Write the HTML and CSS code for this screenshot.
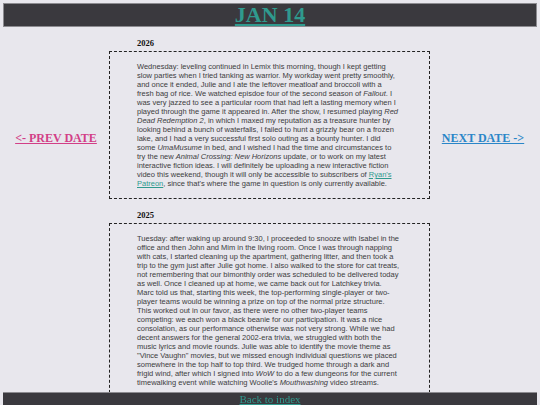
FILE: index.html
```html
<!DOCTYPE html>
<html lang="en">
<head>
  <meta charset="UTF-8">
  <meta name="viewport" content="width=device-width, initial-scale=1.0">
  <title>JAN 14</title>
  <link rel="stylesheet" href="styles.css">
</head>
<body>

<div class="header">
  <h1><a href="#">JAN 14</a></h1>
</div>

<div class="main">
  <div class="side">
    <a class="prev" href="#">&lt;- PREV DATE</a>
  </div>

  <div class="entries">
    <h3 class="year">2026</h3>
    <div class="entry">
      <p>Wednesday: leveling continued in Lemix this morning, though I kept getting slow parties when I tried tanking as warrior. My workday went pretty smoothly, and once it ended, Julie and I ate the leftover meatloaf and broccoli with a fresh bag of rice. We watched episdoe four of the second season of <i>Fallout</i>. I was very jazzed to see a particular room that had left a lasting memory when I played through the game it appeared in. After the show, I resumed playing <i>Red Dead Redemption 2</i>, in which I maxed my reputation as a treasure hunter by looking behind a bunch of waterfalls, I failed to hunt a grizzly bear on a frozen lake, and I had a very successful first solo outing as a bounty hunter. I did some <i>UmaMusume</i> in bed, and I wished I had the time and circumstances to try the new <i>Animal Crossing: New Horizons</i> update, or to work on my latest interactive fiction ideas. I will definitely be uploading a new interactive fiction video this weekend, though it will only be accessible to subscribers of <a href="#">Ryan's Patreon</a>, since that's where the game in question is only currently available.</p>
    </div>

    <h3 class="year">2025</h3>
    <div class="entry">
      <p>Tuesday: after waking up around 9:30, I proceeded to snooze with Isabel in the office and then John and Mim in the living room. Once I was through napping with cats, I started cleaning up the apartment, gathering litter, and then took a trip to the gym just after Julie got home. I also walked to the store for cat treats, not remembering that our bimonthly order was scheduled to be delivered today as well. Once I cleaned up at home, we came back out for Latchkey trivia. Marc told us that, starting this week, the top-performing single-player or two-player teams would be winning a prize on top of the normal prize structure. This worked out in our favor, as there were no other two-player teams competing: we each won a black beanie for our participation. It was a nice consolation, as our performance otherwise was not very strong. While we had decent answers for the general 2002-era trivia, we struggled with both the music lyrics and movie rounds. Julie was able to identify the movie theme as "Vince Vaughn" movies, but we missed enough individual questions we placed somewhere in the top half to top third. We trudged home through a dark and frigid wind, after which I signed into <i>WoW</i> to do a few dungeons for the current timewalking event while watching Woolie's <i>Mouthwashing</i> video streams.</p>
    </div>
  </div>

  <div class="side">
    <a class="next" href="#">NEXT DATE -&gt;</a>
  </div>
</div>

<div class="footer">
  <a href="#">Back to index</a>
</div>

</body>
</html>
```

FILE: styles.css
```css
body {
  margin: 3px;
  background: #e8e7ed;
  font-family: "Liberation Serif", serif;
}

/* barra del titulo */
.header {
  background: #3a393e;
  border: 1px solid #8c8b90;
  text-align: center;
}

.header h1 {
  margin: 0;
  font-size: 22px;
  line-height: 22px;
}

.header a {
  color: #2f9a8e;
}

.main {
  display: flex;
}

.side {
  width: 106px;
  flex-shrink: 0;
  text-align: center;
  padding-top: 101px;
}

.side a {
  font-size: 12px;
  font-weight: bold;
}

.prev {
  color: #d23f87;
}

.next {
  color: #2a86c8;
}

.entries {
  width: 321px;
  padding-bottom: 30px;
}

.year {
  margin: 11px 0 3px 28px;
  font-size: 8.5px;
  line-height: 10px;
  color: #111;
}

.entry {
  border: 1px dashed #222;
  padding: 10px 29px 10px 27px;
}

.entry p {
  margin: 0;
  font-family: "Liberation Sans", Arial, sans-serif;
  font-size: 7.5px;
  line-height: 9px;
  color: #3c3c40;
}

.entry a {
  color: #2f9a8e;
}

/* pie fijo abajo */
.footer {
  position: fixed;
  left: 3px;
  right: 3px;
  bottom: 0;
  height: 12px;
  background: #3a393e;
  border-top: 1px solid #8c8b90;
  text-align: center;
  font-size: 11px;
  line-height: 12px;
}

.footer a {
  color: #2f9a8e;
}
```
